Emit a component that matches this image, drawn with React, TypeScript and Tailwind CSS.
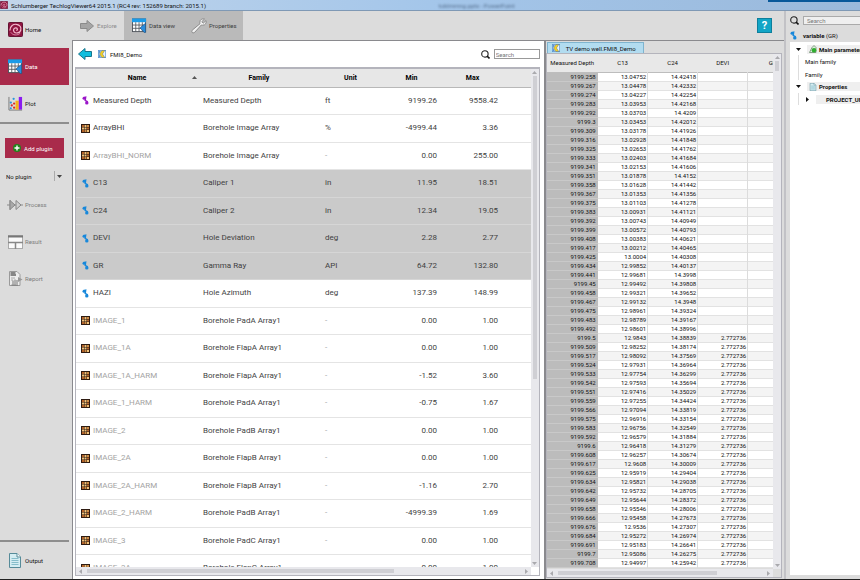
import React from 'react';
import clsx from 'clsx';

type Kind = 'depth' | 'curve' | 'array';

interface Variable {
  kind: Kind;
  name: string;
  family: string;
  unit: string;
  min: string;
  max: string;
  selected?: boolean;
}

const VARIABLES: Variable[] = [
  { kind: 'depth', name: 'Measured Depth', family: 'Measured Depth', unit: 'ft', min: '9199.26', max: '9558.42' },
  { kind: 'array', name: 'ArrayBHI', family: 'Borehole Image Array', unit: '%', min: '-4999.44', max: '3.36' },
  { kind: 'array', name: 'ArrayBHI_NORM', family: 'Borehole Image Array', unit: '-', min: '0.00', max: '255.00' },
  { kind: 'curve', name: 'C13', family: 'Caliper 1', unit: 'in', min: '11.95', max: '18.51', selected: true },
  { kind: 'curve', name: 'C24', family: 'Caliper 2', unit: 'in', min: '12.34', max: '19.05', selected: true },
  { kind: 'curve', name: 'DEVI', family: 'Hole Deviation', unit: 'deg', min: '2.28', max: '2.77', selected: true },
  { kind: 'curve', name: 'GR', family: 'Gamma Ray', unit: 'API', min: '64.72', max: '132.80', selected: true },
  { kind: 'curve', name: 'HAZI', family: 'Hole Azimuth', unit: 'deg', min: '137.39', max: '148.99' },
  { kind: 'array', name: 'IMAGE_1', family: 'Borehole PadA Array1', unit: '-', min: '0.00', max: '1.00' },
  { kind: 'array', name: 'IMAGE_1A', family: 'Borehole FlapA Array1', unit: '-', min: '0.00', max: '1.00' },
  { kind: 'array', name: 'IMAGE_1A_HARM', family: 'Borehole FlapA Array1', unit: '-', min: '-1.52', max: '3.60' },
  { kind: 'array', name: 'IMAGE_1_HARM', family: 'Borehole PadA Array1', unit: '-', min: '-0.75', max: '1.67' },
  { kind: 'array', name: 'IMAGE_2', family: 'Borehole PadB Array1', unit: '-', min: '0.00', max: '1.00' },
  { kind: 'array', name: 'IMAGE_2A', family: 'Borehole FlapB Array1', unit: '-', min: '0.00', max: '1.00' },
  { kind: 'array', name: 'IMAGE_2A_HARM', family: 'Borehole FlapB Array1', unit: '-', min: '-1.16', max: '2.70' },
  { kind: 'array', name: 'IMAGE_2_HARM', family: 'Borehole PadB Array1', unit: '-', min: '-4999.39', max: '1.69' },
  { kind: 'array', name: 'IMAGE_3', family: 'Borehole PadC Array1', unit: '-', min: '0.00', max: '1.00' },
  { kind: 'array', name: 'IMAGE_3A', family: 'Borehole FlapC Array1', unit: '-', min: '0.00', max: '1.00' },
];

// depth, C13, C24
const SAMPLES: [string, string, string][] = [
  ['9199.258', '13.04752', '14.42418'],
  ['9199.267', '13.04478', '14.42332'],
  ['9199.274', '13.04227', '14.42254'],
  ['9199.283', '13.03953', '14.42168'],
  ['9199.292', '13.03703', '14.4209'],
  ['9199.3', '13.03453', '14.42012'],
  ['9199.309', '13.03178', '14.41926'],
  ['9199.316', '13.02928', '14.41848'],
  ['9199.325', '13.02653', '14.41762'],
  ['9199.333', '13.02403', '14.41684'],
  ['9199.341', '13.02153', '14.41606'],
  ['9199.351', '13.01878', '14.4152'],
  ['9199.358', '13.01628', '14.41442'],
  ['9199.367', '13.01353', '14.41356'],
  ['9199.375', '13.01103', '14.41278'],
  ['9199.383', '13.00931', '14.41121'],
  ['9199.392', '13.00743', '14.40949'],
  ['9199.399', '13.00572', '14.40793'],
  ['9199.408', '13.00383', '14.40621'],
  ['9199.417', '13.00212', '14.40465'],
  ['9199.425', '13.0004', '14.40308'],
  ['9199.434', '12.99852', '14.40137'],
  ['9199.441', '12.99681', '14.3998'],
  ['9199.45', '12.99492', '14.39808'],
  ['9199.458', '12.99321', '14.39652'],
  ['9199.467', '12.99132', '14.3948'],
  ['9199.475', '12.98961', '14.39324'],
  ['9199.483', '12.98789', '14.39167'],
  ['9199.492', '12.98601', '14.38996'],
  ['9199.5', '12.9843', '14.38839'],
  ['9199.509', '12.98252', '14.38174'],
  ['9199.517', '12.98092', '14.37569'],
  ['9199.524', '12.97931', '14.36964'],
  ['9199.533', '12.97754', '14.36299'],
  ['9199.542', '12.97593', '14.35694'],
  ['9199.551', '12.97416', '14.35029'],
  ['9199.559', '12.97255', '14.34424'],
  ['9199.566', '12.97094', '14.33819'],
  ['9199.575', '12.96916', '14.33154'],
  ['9199.583', '12.96756', '14.32549'],
  ['9199.592', '12.96579', '14.31884'],
  ['9199.6', '12.96418', '14.31279'],
  ['9199.608', '12.96257', '14.30674'],
  ['9199.617', '12.9608', '14.30009'],
  ['9199.625', '12.95919', '14.29404'],
  ['9199.634', '12.95821', '14.29038'],
  ['9199.642', '12.95732', '14.28705'],
  ['9199.649', '12.95644', '14.28372'],
  ['9199.658', '12.95546', '14.28006'],
  ['9199.666', '12.95458', '14.27673'],
  ['9199.676', '12.9536', '14.27307'],
  ['9199.684', '12.95272', '14.26974'],
  ['9199.691', '12.95183', '14.26641'],
  ['9199.7', '12.95086', '14.26275'],
  ['9199.708', '12.94997', '14.25942'],
];

// DEVI has no samples above this row
const DEVI_START = 29;

/* ---------- icons ---------- */

const SwirlIcon = ({ className }: { className: string }) => (
  <svg viewBox="0 0 16 16" className={className} aria-hidden="true">
    <rect x="0.5" y="0.5" width="15" height="15" rx="1" fill="#8f1440" stroke="#5c0c2b" />
    <path d="M2 9C2 4 6 2 9 2.500C13 3 14.500 6 13.500 9C12.500 12 8 12.500 6.500 10.500C5 8.500 6.500 6 8.500 6.300C10.500 6.600 10.500 8.800 8.800 9" fill="none" stroke="#f3b9cc" strokeWidth="1.300" />
    <path d="M3 11C5 14.500 10 14.500 13 12" fill="none" stroke="#d98ca8" />
  </svg>
);

const GridIcon = ({ className }: { className: string }) => (
  <svg viewBox="0 0 16 16" className={className} aria-hidden="true">
    <rect x="0.5" y="1" width="14" height="13.500" fill="#fff" stroke="#50555c" />
    <rect x="0" y="0.500" width="15" height="4" fill="#1b9be8" />
    <path d="M0.500 7.500H14.500M0.500 11H14.500M4 4.500V14.500M7.500 4.500V14.500M11 4.500V14.500" stroke="#50555c" strokeWidth="0.900" />
    <path d="M14.500 5.500V15.500H13L8.500 10.500Z" fill="#2a8ddd" stroke="#1d4a78" strokeWidth="0.600" />
  </svg>
);

const PlotIcon = () => (
  <svg viewBox="0 0 16 16" className="size-[15px]" aria-hidden="true">
    <path d="M1 1V15H15" fill="none" stroke="#777" />
    <rect x="8" y="5" width="3.500" height="9.500" fill="#f5b31c" />
    <rect x="11.500" y="1" width="3.500" height="13.500" fill="#8a1cf0" />
    <circle cx="6" cy="3" r="1.200" fill="#2796dd" />
    <circle cx="3" cy="7" r="1.200" fill="#2796dd" />
    <circle cx="6.500" cy="8" r="1.200" fill="#d92a2a" />
    <circle cx="4" cy="10" r="1.200" fill="#d92a2a" />
    <circle cx="3" cy="13" r="1.100" fill="#2796dd" />
    <circle cx="6.500" cy="12.500" r="1.200" fill="#d92a2a" />
  </svg>
);

const ProcessIcon = () => (
  <svg viewBox="0 0 16 12" className="h-3 w-4" aria-hidden="true">
    <path d="M0 6H16M3 1V11" stroke="#8a8a8a" />
    <path d="M3 1.500L8 6L3 10.500Z" fill="#a9a9a9" stroke="#888" />
    <path d="M9 1.500L14 6L9 10.500Z" fill="#d0d0d0" stroke="#888" />
  </svg>
);

const ResultIcon = () => (
  <svg viewBox="0 0 15 14" className="h-3.5 w-[15px]" aria-hidden="true">
    <rect x="0.500" y="0.500" width="14" height="13" fill="#fafafa" stroke="#aaa" />
    <path d="M0 1.500H15" stroke="#777" strokeWidth="2" />
    <path d="M0 7.500H15M7.500 7.500V14" stroke="#888" strokeWidth="1.500" />
  </svg>
);

const ReportIcon = () => (
  <svg viewBox="0 0 15 15" className="size-[15px]" aria-hidden="true">
    <path d="M1.500 0.500H9L12 3.500V14.500H1.500Z" fill="#ededed" stroke="#9a9a9a" />
    <path d="M2.500 2H7.500M2.500 4H8" stroke="#666" strokeWidth="1.500" />
    <path d="M3 7H7M3 9H5" stroke="#aaa" />
    <path d="M5 13.500V9.500M7 13.500V8.500M9 13V9M3.500 14L10 14" stroke="#777" />
    <path d="M10 6L14.500 8.500L10 11Z" fill="#999" />
  </svg>
);

const PageIcon = ({ className }: { className: string }) => (
  <svg viewBox="0 0 12 15" className={className} aria-hidden="true">
    <path d="M0.500 0.500H8L11.500 4V14.500H0.500Z" fill="#d5edf2" stroke="#568b99" />
    <path d="M8 0.500V4H11.500" fill="#fff" stroke="#568b99" />
    <path d="M2.500 5.500H9.500M2.500 7.500H9.500M2.500 9.500H9.500M2.500 11.500H9.500" stroke="#86bdca" />
  </svg>
);

const WrenchIcon = () => (
  <svg viewBox="0 0 16 16" className="size-4" aria-hidden="true">
    <path d="M13.500 1L10.800 3.700L12.300 5.200L15 2.500C15.800 4.500 14.500 7.300 11.700 7.200L10.300 7L3.800 14.200C3 15.300 0.700 15.200 0.800 13.300C0.800 12.500 1.300 12.100 1.800 11.700L9 5.700L8.800 4.300C8.800 1.600 11.500 0.200 13.500 1Z" fill="#f2f2f2" stroke="#8c8c8c" />
  </svg>
);

const ArrowIcon = ({ back }: { back?: boolean }) => (
  <svg viewBox="0 0 14 12" className={clsx('h-3 w-3.5', back && 'rotate-180')} aria-hidden="true">
    <path
      d="M0.500 3.500H7V0.500L13.500 6L7 11.500V8.500H0.500Z"
      fill={back ? '#0fbede' : '#a5a5a5'}
      stroke={back ? '#18758c' : '#8b8b8b'}
    />
  </svg>
);

const DatasetIcon = ({ className }: { className: string }) => (
  <svg viewBox="0 0 8 8" className={className} aria-hidden="true">
    <rect x="0.300" y="0.300" width="7.400" height="7.400" fill="#eef4fa" stroke="#4b87c9" strokeWidth="0.600" />
    <path d="M0.500 0.500H3L1.200 4L3 7.500H0.500Z" fill="#5c93cf" />
    <path d="M3.800 0.500H6.800L4.500 4L6.800 7.500H3.800L1.700 4Z" fill="#f6d122" stroke="#3a5c85" strokeWidth="0.400" />
  </svg>
);

const SearchIcon = () => (
  <svg viewBox="0 0 9 9" className="size-[9px] shrink-0" aria-hidden="true">
    <circle cx="3.900" cy="3.900" r="3.200" fill="none" stroke="#222" strokeWidth="1.100" />
    <path d="M6 6L8.500 8.500" stroke="#111" strokeWidth="1.600" />
  </svg>
);

const CurveIcon = ({ color }: { color: string }) => (
  <svg viewBox="0 0 7 9" className="h-[9px] w-[7px] shrink-0" aria-hidden="true">
    <path d="M1.500 1.800L3.600 1.200L3.200 4.300L5.200 5.500L4.500 7.500" fill="none" stroke={color} strokeWidth="1.500" />
    <circle cx="2" cy="2.300" r="1.500" fill={color} />
    <circle cx="4.800" cy="6.900" r="1.700" fill={color} />
  </svg>
);

const ArrayIcon = () => (
  <svg viewBox="0 0 9 9" className="size-[9px]" aria-hidden="true">
    <rect width="9" height="9" fill="#2e1c12" />
    <path d="M1 1H3V3H1ZM6 3.500H8V5.500H6ZM1 6H3V8H1Z" fill="#b5632a" />
    <path d="M3.500 1H5.500V3H3.500ZM1 3.500H3V5.500H1ZM3.500 3.500H5.500V5.500H3.500ZM6 6H8V8H6Z" fill="#f0c27a" />
    <path d="M6 1H8V3H6ZM3.500 6H5.500V8H3.500Z" fill="#d08d45" />
  </svg>
);

const FamilyIcon = () => (
  <svg viewBox="0 0 8 8" className="size-2 shrink-0" aria-hidden="true">
    <path d="M0.500 7.500L3 2.500L5 0.500L7 2.500V7.500Z" fill="#dcefdc" stroke="#6a8a6a" strokeWidth="0.800" />
    <circle cx="5" cy="5.300" r="2.300" fill="#2fae2f" />
  </svg>
);

type Direction = 'up' | 'down' | 'left' | 'right';

const TRIANGLES: Record<Direction, string> = {
  up: 'M0 4L2.500 1L5 4Z',
  down: 'M0 1L2.500 4L5 1Z',
  left: 'M4 0L1 2.500L4 5Z',
  right: 'M1 0L4 2.500L1 5Z',
};

const Triangle = ({ to, color = '#a9a9ad' }: { to: Direction; color?: string }) => (
  <svg viewBox="0 0 5 5" className="size-[5px] shrink-0" aria-hidden="true">
    <path d={TRIANGLES[to]} fill={color} />
  </svg>
);

/* ---------- shared parts ---------- */

const VScroll = ({ thumb }: { thumb: string }) => (
  <div className="flex w-2 shrink-0 flex-col items-center gap-px bg-[#e8e8ec] py-px">
    <Triangle to="up" />
    <div className={clsx('w-1 bg-[#cfcfd4]', thumb)} />
    <div className="flex-1" />
    <Triangle to="down" />
  </div>
);

const HScroll = ({ thumb }: { thumb: string }) => (
  <div className="mr-2 flex h-2 shrink-0 items-center gap-1 bg-[#e8e8ec] px-0.5">
    <Triangle to="left" />
    <div className="flex-1">
      <div className={clsx('h-1 bg-[#cfcfd4]', thumb)} />
    </div>
    <Triangle to="right" />
  </div>
);

interface NavItemProps {
  icon: React.ReactNode;
  label: string;
  active?: boolean;
  disabled?: boolean;
}

const NavItem: React.FC<NavItemProps> = ({ icon, label, active, disabled }) => (
  <button
    type="button"
    disabled={disabled}
    className={clsx(
      'mr-[3px] flex h-[37px] items-center gap-0.5 pl-[7px] text-left',
      active && 'bg-[#a92b4b] text-white',
      disabled && 'text-[#7c7c7c]',
    )}
  >
    <span className="flex w-4 justify-center">{icon}</span>
    {label}
  </button>
);

const Sidebar = () => (
  <nav className="flex w-[72px] shrink-0 flex-col">
    <NavItem icon={<SwirlIcon className="size-[15px]" />} label="Home" />
    <NavItem icon={<GridIcon className="size-[15px]" />} label="Data" active />
    <NavItem icon={<PlotIcon />} label="Plot" />
    <hr className="mr-[3px] border-t-2 border-[#8e8e8e]" />
    <button
      type="button"
      className="mx-[5px] mt-3.5 mr-2 flex h-5 items-center gap-[3px] bg-[#a92b4b] pl-2 text-white"
    >
      <svg viewBox="0 0 8 8" className="size-2" aria-hidden="true">
        <circle cx="4" cy="4" r="4" fill="#23841c" />
        <path d="M4 1.500V6.500M1.500 4H6.500" stroke="#fff" strokeWidth="1.400" />
      </svg>
      Add plugin
    </button>
    <div className="mr-1.5 flex h-7 items-center pt-2 pl-1.5">
      <select aria-label="Plugin" className="min-w-0 flex-1 appearance-none">
        <option>No plugin</option>
      </select>
      <span className="flex h-2.5 items-center border-l border-[#aaa] pl-0.5 pr-1">
        <Triangle to="down" color="#444" />
      </span>
    </div>
    <NavItem icon={<ProcessIcon />} label="Process" disabled />
    <NavItem icon={<ResultIcon />} label="Result" disabled />
    <NavItem icon={<ReportIcon />} label="Report" disabled />
    <div className="flex-1" />
    <hr className="mr-[3px] border-t-2 border-[#8e8e8e]" />
    <NavItem icon={<PageIcon className="h-[15px] w-3" />} label="Output" />
  </nav>
);

const Toolbar = () => (
  <div className="flex h-[29px] shrink-0 items-center pl-1">
    <button type="button" disabled className="flex h-full w-12 items-center gap-[3px] pl-1 text-[#8c8c8c]">
      <ArrowIcon />
      Explore
    </button>
    <div className="flex h-full bg-[#bababa] text-[#3c3c3c]">
      <button type="button" className="flex w-[61px] items-center gap-0.5 pl-2">
        <GridIcon className="size-[15px]" />
        Data view
      </button>
      <button type="button" className="flex w-[58px] items-center gap-0.5 pl-1.5">
        <WrenchIcon />
        Properties
      </button>
    </div>
    <button
      type="button"
      aria-label="Help"
      className="mr-3 ml-auto size-[15px] border border-[#0d7f9c] bg-[#12a5c6] text-[11px] leading-3 font-bold text-white"
    >
      ?
    </button>
  </div>
);

const VariableTable = () => (
  <section className="flex min-w-0 flex-[464] flex-col border-r-2 border-[#8a8a8e] bg-white pr-1 pl-0.5">
    <div className="flex h-[26px] shrink-0 items-center gap-1 pl-[3px]">
      <button type="button" aria-label="Back" className="mr-0.5">
        <ArrowIcon back />
      </button>
      <DatasetIcon className="size-2" />
      <h1>FMI8_Demo</h1>
      <label htmlFor="variable-search" className="ml-auto" aria-label="Search variables">
        <SearchIcon />
      </label>
      <input
        id="variable-search"
        placeholder="Search"
        className="h-2.5 w-[46px] border border-[#999] bg-white px-px placeholder:text-[#777]"
      />
    </div>
    <div className="mb-[3px] flex min-h-0 flex-1 flex-col border border-t-2 border-[#b4b4bc]">
      <div className="flex min-h-0 flex-1">
        <div className="min-w-0 flex-1 overflow-hidden">
          <table className="w-full table-fixed border-collapse text-[8px] leading-[10px]">
            <colgroup>
              <col className="w-[122px]" />
              <col className="w-[122px]" />
              <col className="w-[61px]" />
              <col className="w-[61px]" />
              <col className="w-[61px]" />
              <col />
            </colgroup>
            <thead>
              <tr className="h-[18px] border-b border-[#b8b8b8] bg-[#e7e7e7] text-[7px] text-black">
                <th>
                  <span className="relative block">
                    Name
                    <span className="absolute top-0.5 right-px">
                      <Triangle to="up" color="#555" />
                    </span>
                  </span>
                </th>
                <th>Family</th>
                <th>Unit</th>
                <th>Min</th>
                <th>Max</th>
                <th aria-hidden="true" />
              </tr>
            </thead>
            <tbody className="text-[#3f3f3f]">
              {VARIABLES.map((v) => (
                <tr
                  key={v.name}
                  className={clsx(
                    'border-b odd:h-[27px] even:h-7',
                    v.selected ? 'border-[#d6d6d6] bg-[#cacaca]' : 'border-[#e4e4e4]',
                  )}
                >
                  <td>
                    <span className="flex items-center gap-[3px] pl-[5px]">
                      <span className="flex w-[9px] justify-center">
                        {v.kind === 'array' ? (
                          <ArrayIcon />
                        ) : (
                          <CurveIcon color={v.kind === 'depth' ? '#9b16c9' : '#1788db'} />
                        )}
                      </span>
                      <span
                        className={clsx(v.kind === 'array' && v.name !== 'ArrayBHI' && 'text-[#a3a3a3]')}
                      >
                        {v.name}
                      </span>
                    </span>
                  </td>
                  <td className="pl-[5px] whitespace-nowrap">{v.family}</td>
                  <td className={clsx('pl-[5px]', v.unit === '-' && 'text-[#a3a3a3]')}>{v.unit}</td>
                  <td className="pr-[5px] text-right">{v.min}</td>
                  <td className="pr-[5px] text-right">{v.max}</td>
                  <td />
                </tr>
              ))}
            </tbody>
          </table>
        </div>
        <VScroll thumb="h-[61%]" />
      </div>
      <HScroll thumb="w-[71%]" />
    </div>
  </section>
);

const SampleTable = () => (
  <section className="flex min-w-0 flex-[236] flex-col pr-0.5">
    <div className="flex h-3 shrink-0 items-end pt-px pl-px">
      <button
        type="button"
        className="flex h-full w-[97px] items-center gap-1.5 border border-b-0 border-[#7fb4cf] bg-[#b2dcf0] pl-1 whitespace-nowrap"
      >
        <DatasetIcon className="size-2" />
        TV demo well.FMI8_Demo
      </button>
    </div>
    <div className="mb-px flex min-h-0 flex-1 flex-col border border-[#b4b4bc]">
      <div className="flex min-h-0 flex-1">
        <div className="min-w-0 flex-1 overflow-hidden">
          <table className="w-[251px] table-fixed border-collapse leading-2 text-[#111]">
            <colgroup>
              <col className="w-[51px]" />
              <col className="w-[50px]" />
              <col className="w-[50px]" />
              <col className="w-[50px]" />
              <col className="w-[50px]" />
            </colgroup>
            <thead>
              <tr className="h-[18px] border-b border-[#bdbdbd] bg-[#e8e8e8] whitespace-nowrap">
                <th className="font-normal">Measured Depth</th>
                <th className="font-normal">C13</th>
                <th className="font-normal">C24</th>
                <th className="font-normal">DEVI</th>
                <th className="font-normal">GR</th>
              </tr>
            </thead>
            <tbody>
              {SAMPLES.map(([depth, c13, c24], i) => (
                <tr key={depth} className="h-[9px] border-b border-[#e2e2e2] bg-white text-right even:bg-[#f4f4f4]">
                  <th className="border-b border-[#c9c9c9] bg-[#bcbcbc] p-0 pr-0.5 text-right font-normal">
                    {depth}
                  </th>
                  <td className="border-r border-[#dcdcdc] p-0 pr-px">{c13}</td>
                  <td className="border-r border-[#dcdcdc] p-0 pr-px">{c24}</td>
                  <td className="border-r border-[#dcdcdc] p-0 pr-px">{i >= DEVI_START ? '2.772736' : ''}</td>
                  <td />
                </tr>
              ))}
            </tbody>
          </table>
        </div>
        <VScroll thumb="h-2.5" />
      </div>
      <HScroll thumb="w-[78%]" />
    </div>
  </section>
);

const PropertyPanel = () => (
  <aside className="flex min-w-0 flex-[70] flex-col overflow-hidden border-l-2 border-[#c2c2c6] pl-1 whitespace-nowrap">
    <div className="flex h-[18px] shrink-0 items-center gap-1">
      <label htmlFor="property-search" aria-label="Search properties">
        <SearchIcon />
      </label>
      <input
        id="property-search"
        placeholder="Search"
        className="h-[9px] min-w-0 flex-1 border border-r-0 border-[#aaa] bg-[#efefef] px-[3px] placeholder:text-[#777]"
      />
    </div>
    <div className="flex h-[13px] shrink-0 items-center gap-1.5">
      <CurveIcon color="#1788db" />
      <p>
        <b>variable</b> (GR)
      </p>
    </div>
    <div className="mb-1 flex-1 bg-white pt-px">
      <button type="button" className="flex h-3 w-full items-center gap-1.5 pl-1.5 font-bold">
        <Triangle to="down" color="#111" />
        <span className="flex flex-1 items-center gap-0.5 bg-[#efefef] pl-0.5">
          <FamilyIcon />
          Main parameters
        </span>
      </button>
      <div className="ml-2 border-l border-[#ddd] pl-1.5">
        <p className="flex h-[13px] items-center">Main family</p>
        <p className="flex h-3 items-center">Family</p>
      </div>
      <button type="button" className="flex h-[13px] w-full items-center gap-1.5 pl-1.5 font-bold">
        <Triangle to="down" color="#111" />
        <span className="flex flex-1 items-center gap-0.5 bg-[#efefef] pl-0.5">
          <PageIcon className="size-2" />
          Properties
        </span>
      </button>
      <button
        type="button"
        className="ml-2 flex h-3 w-full items-center gap-1.5 border-l border-[#ddd] pl-1.5 font-bold"
      >
        <Triangle to="right" color="#111" />
        <span className="flex-1 bg-[#efefef] pl-2.5 text-left">PROJECT_UNIT</span>
      </button>
    </div>
  </aside>
);

export default function App() {
  return (
    <div className="flex h-screen flex-col overflow-hidden border-b border-[#222] bg-[#dcdcdc] font-['Roboto','Open_Sans',sans-serif] text-[6px] leading-[9px] text-[#111]">
      <header className="relative flex h-[11px] shrink-0 items-center gap-[3px] border-b border-[#7f99b5] bg-linear-to-r from-[#c3d6ea] via-[#a4c6ea] to-[#9ab9db] whitespace-nowrap">
        <SwirlIcon className="size-2" />
        <span>Schlumberger TechlogViewer64 2015.1 (RC4 rev: 152689 branch: 2015.1)</span>
        <span className="absolute top-0.5 left-[51%] leading-2 text-[#56708f] blur-[1px]">
          toblmmng.pptx - PowerPoint
        </span>
        <span className="absolute top-0 right-0 h-0.5 w-[92px] bg-[#07589a]" />
      </header>
      <div className="flex min-h-0 flex-1">
        <Sidebar />
        <main className="flex min-w-0 flex-[712] flex-col">
          <Toolbar />
          <div className="flex min-h-0 flex-1 border-t border-l border-[#8a8a8e]">
            <VariableTable />
            <SampleTable />
          </div>
        </main>
        <PropertyPanel />
      </div>
    </div>
  );
}
